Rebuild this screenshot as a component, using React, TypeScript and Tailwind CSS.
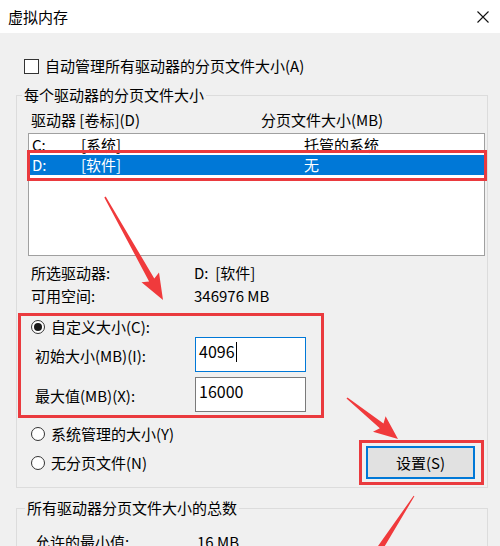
import React from "react";

function arrowPoints(
  x0: number,
  y0: number,
  x1: number,
  y1: number,
  headLen: number,
  headW: number,
  s0: number,
  s1: number
): string {
  const dx = x1 - x0;
  const dy = y1 - y0;
  const len = Math.hypot(dx, dy);
  const ux = dx / len;
  const uy = dy / len;
  const nx = -uy;
  const ny = ux;
  const bx = x1 - ux * headLen;
  const by = y1 - uy * headLen;
  const nb = 3;
  const pts: [number, number][] = [
    [x0 + (nx * s0) / 2, y0 + (ny * s0) / 2],
    [bx + ux * nb + (nx * s1) / 2, by + uy * nb + (ny * s1) / 2],
    [bx + (nx * headW) / 2, by + (ny * headW) / 2],
    [x1, y1],
    [bx - (nx * headW) / 2, by - (ny * headW) / 2],
    [bx + ux * nb - (nx * s1) / 2, by + uy * nb - (ny * s1) / 2],
    [x0 - (nx * s0) / 2, y0 - (ny * s0) / 2],
  ];
  return pts.map((p) => `${p[0].toFixed(1)},${p[1].toFixed(1)}`).join(" ");
}

function Radio({ checked }: { checked?: boolean }) {
  return (
    <span className="flex h-[14px] w-[14px] shrink-0 items-center justify-center rounded-full border border-[#333333] bg-white">
      {checked && <span className="h-[8px] w-[8px] rounded-full bg-[#1a1a1a]" />}
    </span>
  );
}

export default function App() {
  return (
    <div className="relative h-[546px] w-[500px] overflow-hidden bg-[#f0f0f0] font-['Microsoft_YaHei','Noto_Sans_CJK_SC','Noto_Sans',sans-serif] text-[15px] text-black">
      {/* Title bar */}
      <div className="flex h-[33px] items-center justify-between bg-white pl-[8px] pr-[11px]">
        <span className="leading-[20px]">虚拟内存</span>
        <svg width="12" height="12" viewBox="0 0 12 12" className="mt-[1px]">
          <path d="M0.5 0.5 L11.5 11.5 M11.5 0.5 L0.5 11.5" stroke="#111" strokeWidth="1.1" fill="none" />
        </svg>
      </div>

      {/* Auto manage checkbox */}
      <div className="mt-[23px] flex h-[20px] items-center pl-[24px]">
        <span className="h-[15px] w-[15px] shrink-0 border border-[#333333] bg-white" />
        <span className="ml-[6px] leading-[20px]">自动管理所有驱动器的分页文件大小(A)</span>
      </div>

      {/* Group 1 */}
      <fieldset className="ml-[16px] mt-[9px] h-[403px] w-[472px] border border-[#dcdcdc] pl-[11px]">
        <legend className="-ml-[6px] px-[2px] leading-[20px]">每个驱动器的分页文件大小</legend>

        <div className="mt-[5px] flex h-[20px] items-center pl-[3px] leading-[20px]">
          <span className="w-[230px]">驱动器 [卷标](D)</span>
          <span>分页文件大小(MB)</span>
        </div>

        {/* List */}
        <div className="relative mt-[3px] h-[123px] w-[457px] border border-[#a0a0a0] bg-white pt-[1px]">
          <div className="flex h-[20px] items-center pl-[3px] leading-[20px]">
            <span className="w-[49px]">C:</span>
            <span className="w-[223px]">[系统]</span>
            <span>托管的系统</span>
          </div>
          <div className="flex h-[20px] items-center bg-[#0078d7] pl-[3px] leading-[20px] text-white">
            <span className="w-[49px]">D:</span>
            <span className="w-[223px]">[软件]</span>
            <span>无</span>
          </div>
          <div className="absolute left-[-2px] top-[16px] h-[31px] w-[460px] border-[3px] border-[#ea3a3e]" />
        </div>

        <div className="mt-[7px] flex h-[20px] items-center pl-[3px] leading-[20px]">
          <span className="w-[163px]">所选驱动器:</span>
          <span>D:&nbsp;&nbsp;[软件]</span>
        </div>
        <div className="mt-[3px] flex h-[20px] items-center pl-[3px] leading-[20px]">
          <span className="w-[163px]">可用空间:</span>
          <span>346976 MB</span>
        </div>

        {/* Custom size red box */}
        <div className="-ml-[10px] mt-[7px] h-[105px] w-[306px] border-[3px] border-[#ea3a3e]">
          <div className="mt-[1px] flex h-[20px] items-center pl-[10px]">
            <Radio checked />
            <span className="ml-[6px] leading-[20px]">自定义大小(C):</span>
          </div>
          <div className="flex h-[35px] items-center pl-[14px]">
            <span className="mt-[3px] w-[160px] leading-[20px]">初始大小(MB)(I):</span>
            <div className="flex h-[35px] w-[111px] items-start border border-[#0078d7] bg-white pl-[3px] pt-[3px] text-[16px] leading-[20px]">
              <span>4096</span>
              <span className="ml-[1px] mt-[1px] h-[20px] w-[1px] bg-black" />
            </div>
          </div>
          <div className="mt-[5px] flex h-[35px] items-center pl-[14px]">
            <span className="mt-[3px] w-[160px] leading-[20px]">最大值(MB)(X):</span>
            <div className="flex h-[35px] w-[111px] items-start border border-[#7a7a7a] bg-white pl-[3px] pt-[3px] text-[16px] leading-[20px]">
              <span>16000</span>
            </div>
          </div>
        </div>

        {/* Bottom radios + button */}
        <div className="flex items-start">
          <div className="flex flex-col pl-[3px]">
            <div className="mt-[6px] flex h-[20px] items-center">
              <Radio />
              <span className="ml-[6px] leading-[20px]">系统管理的大小(Y)</span>
            </div>
            <div className="mt-[9px] flex h-[20px] items-center">
              <Radio />
              <span className="ml-[6px] leading-[20px]">无分页文件(N)</span>
            </div>
          </div>
          <div className="ml-auto mr-[3px] mt-[22px] h-[45px] w-[125px] border-[3px] border-[#ea3a3e] pl-[4px] pt-[3px]">
            <div className="flex h-[33px] w-[109px] items-center justify-center border-2 border-[#0078d7] bg-[#e1e1e1] leading-[20px]">
              设置(S)
            </div>
          </div>
        </div>
      </fieldset>

      {/* Group 2 */}
      <fieldset className="ml-[16px] mt-[10px] h-[80px] w-[472px] border border-[#dcdcdc] pl-[18px]">
        <legend className="-ml-[10px] px-[2px] leading-[20px]">所有驱动器分页文件大小的总数</legend>
        <div className="mt-[14px] flex h-[20px] items-center leading-[20px]">
          <span className="w-[162px]">允许的最小值:</span>
          <span>16 MB</span>
        </div>
      </fieldset>

      {/* Annotation arrows */}
      <svg className="pointer-events-none absolute left-0 top-0" width="500" height="546" viewBox="0 0 500 546">
        <polygon points={arrowPoints(105, 197, 163, 300, 26, 20, 1.5, 6)} fill="#f03a3c" />
        <polygon points={arrowPoints(347, 398, 398, 439, 24, 20, 1.5, 6)} fill="#f03a3c" />
        <polygon points={arrowPoints(414, 496, 362, 576, 22, 20, 1, 7)} fill="#f03a3c" />
      </svg>
    </div>
  );
}
